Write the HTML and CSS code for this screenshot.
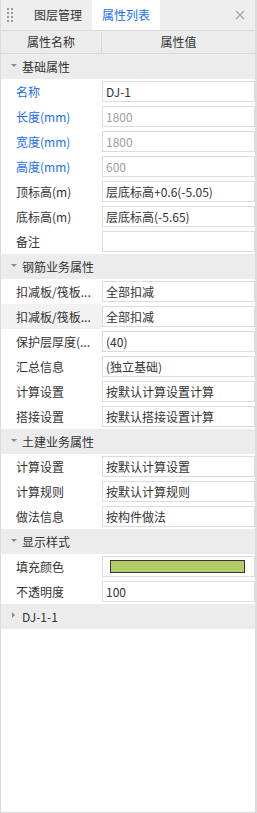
FILE: index.html
```html
<!DOCTYPE html>
<html lang="zh-CN">
<head>
    <meta charset="UTF-8">
    <meta name="viewport" content="width=device-width, initial-scale=1.0">
    <title>属性列表</title>
    <link rel="stylesheet" href="styles.css">
</head>
<body>
    <div class="panel">
        <!-- Tabs -->
        <div class="tabbar">
            <span class="grip"><i></i><i></i><i></i><i></i><i></i><i></i><i></i><i></i></span>
            <span class="tab first">图层管理</span>
            <span class="tab active">属性列表</span>
            <span class="close">
                <svg width="10" height="10" viewBox="0 0 10 10"><path d="M1 1L9 9M9 1L1 9" stroke="#a8a8a8" stroke-width="1.3"/></svg>
            </span>
        </div>

        <!-- Column headers -->
        <div class="head">
            <div class="head-name">属性名称</div>
            <div class="head-value">属性值</div>
        </div>

        <div class="group"><span class="caret down"></span>基础属性</div>
        <div class="row"><div class="name blue">名称</div><div class="value"><div class="box">DJ-1</div></div></div>
        <div class="row"><div class="name blue">长度(mm)</div><div class="value"><div class="box muted">1800</div></div></div>
        <div class="row"><div class="name blue">宽度(mm)</div><div class="value"><div class="box muted">1800</div></div></div>
        <div class="row"><div class="name blue">高度(mm)</div><div class="value"><div class="box muted">600</div></div></div>
        <div class="row"><div class="name">顶标高(m)</div><div class="value"><div class="box">层底标高+0.6(-5.05)</div></div></div>
        <div class="row"><div class="name">底标高(m)</div><div class="value"><div class="box">层底标高(-5.65)</div></div></div>
        <div class="row"><div class="name">备注</div><div class="value"><div class="box"></div></div></div>

        <div class="group"><span class="caret down"></span>钢筋业务属性</div>
        <div class="row"><div class="name">扣减板/筏板...</div><div class="value"><div class="box">全部扣减</div></div></div>
        <div class="row hover"><div class="name">扣减板/筏板...</div><div class="value"><div class="box">全部扣减</div></div></div>
        <div class="row"><div class="name">保护层厚度(...</div><div class="value"><div class="box">(40)</div></div></div>
        <div class="row"><div class="name">汇总信息</div><div class="value"><div class="box">(独立基础)</div></div></div>
        <div class="row"><div class="name">计算设置</div><div class="value"><div class="box">按默认计算设置计算</div></div></div>
        <div class="row"><div class="name">搭接设置</div><div class="value"><div class="box">按默认搭接设置计算</div></div></div>

        <div class="group"><span class="caret down"></span>土建业务属性</div>
        <div class="row"><div class="name">计算设置</div><div class="value"><div class="box">按默认计算设置</div></div></div>
        <div class="row"><div class="name">计算规则</div><div class="value"><div class="box">按默认计算规则</div></div></div>
        <div class="row"><div class="name">做法信息</div><div class="value"><div class="box">按构件做法</div></div></div>

        <div class="group"><span class="caret down"></span>显示样式</div>
        <div class="row"><div class="name">填充颜色</div><div class="value"><div class="box"><span class="swatch"></span></div></div></div>
        <div class="row"><div class="name">不透明度</div><div class="value"><div class="box">100</div></div></div>

        <div class="group"><span class="caret right"></span>DJ-1-1</div>
    </div>
</body>
</html>
```

FILE: styles.css
```css
/* Global */
body {
    margin: 0;
    font-family: "Noto Sans CJK SC", "Noto Sans", sans-serif;
    font-size: 12px;
    color: #333;
    background: #fff;
}

.panel {
    width: 257px;
    height: 813px;
    box-sizing: border-box;
    border-left: 1px solid #dcdcdc;
    border-right: 2px solid #dcdcdc;
    border-bottom: 1px solid #dcdcdc;
    overflow: hidden;
}

/* Tab bar */
.tabbar {
    height: 30px;
    display: flex;
    align-items: stretch;
    background: #eeeeef;
}

.grip {
    width: 6px;
    margin: 8px 0 0 6px;
    display: grid;
    grid-template-columns: 2px 2px;
    grid-auto-rows: 2px;
    column-gap: 2px;
    row-gap: 2px;
    align-content: start;
}

.grip i {
    background: #9a9a9a;
}

.tab {
    padding: 0 10px;
    line-height: 30px;
    font-size: 12px;
    color: #333;
}

.tab.first {
    margin-left: 11px;
}

.tab.active {
    background: #fff;
    color: #1a6ef5;
}

.close {
    margin-left: auto;
    width: 30px;
    display: flex;
    align-items: center;
    justify-content: center;
}

/* Column header */
.head {
    height: 24px;
    box-sizing: border-box;
    display: flex;
    background: #ececec;
    border-top: 1px solid #d9d9d9;
    border-bottom: 1px solid #d9d9d9;
}

.head-name,
.head-value {
    text-align: center;
    line-height: 22px;
}

.head-name {
    width: 100px;
    border-right: 1px solid #d9d9d9;
}

.head-value {
    flex: 1;
}

/* Groups */
.group {
    height: 25px;
    line-height: 25px;
    background: #ececec;
    display: flex;
    align-items: center;
    padding-left: 9px;
}

.caret {
    width: 12px;
    height: 6px;
    position: relative;
}

.caret.down::before {
    content: "";
    position: absolute;
    left: 1px;
    top: 0;
    border-left: 3px solid transparent;
    border-right: 3px solid transparent;
    border-top: 3px solid #8a8a8a;
}

.caret.right::before {
    content: "";
    position: absolute;
    left: 2px;
    top: -2px;
    border-top: 3px solid transparent;
    border-bottom: 3px solid transparent;
    border-left: 3px solid #8a8a8a;
}

/* Rows */
.row {
    height: 25px;
    display: flex;
}

.name {
    width: 86px;
    padding-left: 15px;
    line-height: 25px;
    white-space: nowrap;
}

.row.hover .name {
    background: #f2f2f2;
}

.name.blue {
    color: #1a6ef5;
}

.value {
    flex: 1;
    padding: 2px 0 2px 0;
}

.box {
    height: 21px;
    box-sizing: border-box;
    border: 1px solid #dcdcdc;
    padding-left: 3px;
    line-height: 19px;
    white-space: nowrap;
    overflow: hidden;
    display: flex;
    align-items: center;
}

.box.muted {
    color: #a0a0a0;
}

.swatch {
    display: block;
    margin-left: 4px;
    width: 135px;
    height: 13px;
    box-sizing: border-box;
    border: 1px solid #333;
    background: #b3cc66;
}
```
